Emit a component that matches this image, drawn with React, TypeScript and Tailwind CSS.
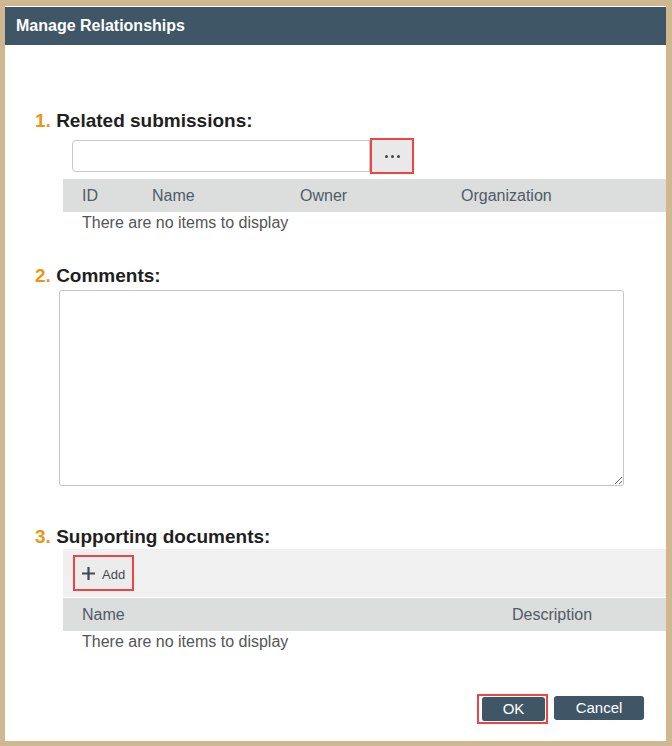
export default function App() {
  return (
    <div className="w-[672px] h-[746px] bg-[#cfb88f] pl-[5px] pr-[6px] pt-[6px] pb-[5px] font-['Liberation_Sans',Arial,sans-serif]">
      <div className="h-full bg-white pt-px flex flex-col">
        {/* Title bar */}
        <div className="h-[38px] bg-[#3f5667] px-[11px] flex items-center">
          <h1 className="text-[16px] font-bold text-white">Manage Relationships</h1>
        </div>

        {/* 1. Related submissions */}
        <h2 className="mt-[65px] pl-[30px] h-[22px] leading-[22px] text-[19px] font-bold text-[#1f1f1f]">
          <span className="text-[#eb9516]">1.</span> Related submissions:
        </h2>
        <div className="mt-[6px] ml-[67px] flex items-center">
          <input
            type="text"
            className="w-[298px] h-[32px] border border-[#c8c8c8] rounded-l-[4px] outline-none"
          />
          <button className="w-[44px] h-[36px] border-2 border-[#ef4444] bg-[#e9e9e9] flex items-center justify-center gap-[3px]">
            <span className="w-[3px] h-[3px] rounded-full bg-[#444]" />
            <span className="w-[3px] h-[3px] rounded-full bg-[#444]" />
            <span className="w-[3px] h-[3px] rounded-full bg-[#444]" />
          </button>
        </div>
        <div className="mt-[5px] ml-[58px] h-[33px] bg-[#dcdedd] pl-[19px] flex items-center text-[16px] text-[#4f5b66]">
          <span className="w-[70px]">ID</span>
          <span className="w-[148px]">Name</span>
          <span className="w-[161px]">Owner</span>
          <span>Organization</span>
        </div>
        <p className="ml-[58px] pl-[19px] pt-px h-[21px] leading-[20px] text-[16px] text-[#555]">
          There are no items to display
        </p>

        {/* 2. Comments */}
        <h2 className="mt-[32px] pl-[30px] h-[22px] leading-[22px] text-[19px] font-bold text-[#1f1f1f]">
          <span className="text-[#eb9516]">2.</span> Comments:
        </h2>
        <textarea className="mt-[3px] ml-[54px] w-[565px] h-[196px] border border-[#c5c5c5] rounded-[3px] outline-none resize" />

        {/* 3. Supporting documents */}
        <h2 className="mt-[40px] pl-[30px] h-[22px] leading-[22px] text-[19px] font-bold text-[#1f1f1f]">
          <span className="text-[#eb9516]">3.</span> Supporting documents:
        </h2>
        <div className="mt-px ml-[58px] h-[48px] bg-[#f0f0f0] pl-[10px] flex items-center">
          <button className="w-[61px] h-[36px] border-2 border-[#ef4444] bg-[#ececec] flex items-center pl-[6px] gap-[6px] text-[#3f4a55]">
            <svg width="15" height="15" viewBox="0 0 15 15">
              <path d="M7.5 1v13M1 7.5h13" stroke="#3f4a55" strokeWidth="2.2" />
            </svg>
            <span className="text-[13px] mt-[4px]">Add</span>
          </button>
        </div>
        <div className="mt-px ml-[58px] h-[33px] bg-[#dcdedd] pl-[19px] flex items-center text-[16px] text-[#4f5b66]">
          <span className="w-[430px]">Name</span>
          <span>Description</span>
        </div>
        <p className="ml-[58px] pl-[19px] pt-px h-[21px] leading-[20px] text-[16px] text-[#555]">
          There are no items to display
        </p>

        {/* Footer */}
        <div className="mt-auto pr-[22px] pb-[21px] flex items-end justify-end gap-[6px]">
          <div className="border-2 border-[#ef4444] pl-[2px] pr-px py-px -mb-[4px]">
            <button className="w-[64px] h-[24px] bg-[#3f5667] border-l border-white rounded-[3px] text-[15px] text-white">
              OK
            </button>
          </div>
          <button className="w-[90px] h-[24px] bg-[#3f5667] rounded-[3px] text-[15px] text-white">
            Cancel
          </button>
        </div>
      </div>
    </div>
  );
}
